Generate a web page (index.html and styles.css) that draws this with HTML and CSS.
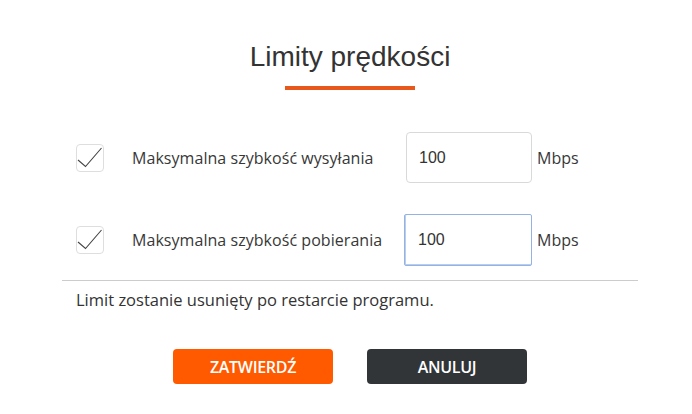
FILE: index.html
```html
<!DOCTYPE html>
<html lang="pl">
<head>
<meta charset="utf-8">
<title>Limity prędkości</title>
<link rel="stylesheet" href="styles.css">
</head>
<body>
<div class="dialog">
  <h1 class="title">Limity prędkości</h1>
  <div class="title-bar"></div>

  <div class="rows">
    <div class="row">
      <span class="checkbox">
        <svg viewBox="0 0 28 28" width="28" height="28"><path d="M2 16 L9.5 22.5 L25.5 4" fill="none" stroke="#444444" stroke-width="1.1"/></svg>
      </span>
      <span class="label">Maksymalna szybkość wysyłania</span>
      <span class="input">100</span>
      <span class="unit">Mbps</span>
    </div>
    <div class="row">
      <span class="checkbox">
        <svg viewBox="0 0 28 28" width="28" height="28"><path d="M2 16 L9.5 22.5 L25.5 4" fill="none" stroke="#444444" stroke-width="1.1"/></svg>
      </span>
      <span class="label">Maksymalna szybkość pobierania</span>
      <span class="input focused">100</span>
      <span class="unit">Mbps</span>
    </div>
  </div>

  <div class="divider"></div>
  <p class="note">Limit zostanie usunięty po restarcie programu.</p>

  <div class="buttons">
    <button class="btn btn-primary">ZATWIERDŹ</button>
    <button class="btn btn-dark">ANULUJ</button>
  </div>
</div>
</body>
</html>
```

FILE: styles.css
```css
html, body {
  margin: 0;
  padding: 0;
  background: #ffffff;
}

body {
  font-family: "Open Sans", "Liberation Sans", sans-serif;
  color: #333333;
}

.dialog {
  width: 576px;
  margin-left: 62px;
  padding-top: 41px;
  display: flex;
  flex-direction: column;
}

.title {
  margin: 0;
  font-family: "Liberation Sans", Arial, sans-serif;
  font-weight: normal;
  font-size: 28px;
  line-height: 32px;
  color: #333333;
  text-align: center;
}

.title-bar {
  align-self: center;
  width: 130px;
  height: 4px;
  margin-top: 13px;
  background: #e8581c;
}

.rows {
  margin-top: 42px;
  display: flex;
  flex-direction: column;
  gap: 31px;
}

.row {
  display: flex;
  align-items: center;
  height: 51px;
}

.checkbox {
  box-sizing: border-box;
  width: 28px;
  height: 28px;
  margin-left: 14px;
  border: 1px solid #dedede;
  border-radius: 4px;
  position: relative;
  flex: none;
}

.checkbox svg {
  position: absolute;
  left: -1px;
  top: -1px;
}

.label {
  width: 274px;
  margin-left: 28px;
  font-size: 16px;
  letter-spacing: 0.05px;
  color: #383838;
  flex: none;
}

.input {
  box-sizing: border-box;
  width: 126px;
  height: 51px;
  padding-left: 12px;
  border: 1px solid #d9d9d9;
  border-radius: 4px;
  display: flex;
  align-items: center;
  font-family: "Liberation Sans", Arial, sans-serif;
  font-size: 16px;
  color: #333333;
  flex: none;
}

.input.focused {
  width: 128px;
  height: 52px;
  margin-left: -2px;
  padding-left: 13px;
  border: 1px solid #94b3e3;
  box-shadow: inset 1px 0 0 #b9cdef, inset 0 -1px 0 #b9cdef;
  border-radius: 2px;
}

.unit {
  margin-left: 5px;
  font-size: 16px;
  color: #383838;
}

.divider {
  margin-top: 15px;
  height: 1px;
  background: #cccccc;
}

.note {
  margin: 8px 0 0 14px;
  font-size: 16.5px;
  line-height: 22px;
  color: #333333;
}

.buttons {
  margin-top: 38px;
  display: flex;
  justify-content: center;
  gap: 34px;
}

.btn {
  width: 160px;
  height: 35px;
  border: none;
  border-radius: 4px;
  font-family: "Open Sans", sans-serif;
  font-weight: 600;
  font-size: 16px;
  color: #ffffff;
  padding: 0;
  letter-spacing: -0.3px;
}

.btn-primary {
  background: #ff5a00;
}

.btn-dark {
  background: #323538;
}
```
